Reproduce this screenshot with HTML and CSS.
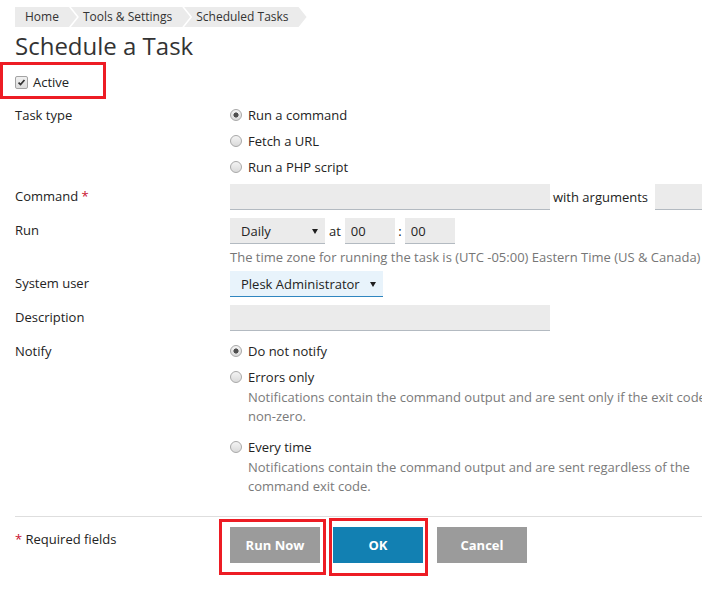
FILE: index.html
```html
<!DOCTYPE html>
<html lang="en">
<head>
    <meta charset="UTF-8">
    <meta name="viewport" content="width=device-width, initial-scale=1.0">
    <title>Schedule a Task</title>
    <link rel="stylesheet" href="styles.css">
</head>
<body>
    <div class="page">
        <ul class="breadcrumbs">
            <li>Home</li>
            <li>Tools &amp; Settings</li>
            <li>Scheduled Tasks</li>
        </ul>

        <h1>Schedule a Task</h1>

        <div class="active-box">
            <label class="check">
                <span class="checkbox">
                    <svg width="13" height="13" viewBox="0 0 13 13">
                        <path d="M3 6.6 L5.4 9 L10 3.6" fill="none" stroke="#333" stroke-width="2"/>
                    </svg>
                </span>
                Active
            </label>
        </div>

        <form class="task-form">
            <!-- task type -->
            <div class="row">
                <div class="label">Task type</div>
                <div class="field">
                    <label class="radio"><input type="radio" name="type" checked>Run a command</label>
                    <label class="radio"><input type="radio" name="type">Fetch a URL</label>
                    <label class="radio"><input type="radio" name="type">Run a PHP script</label>
                </div>
            </div>

            <div class="row row-command">
                <div class="label label-input">Command <span class="req">*</span></div>
                <div class="field inline">
                    <input class="input input-wide" type="text">
                    <span class="args-text">with arguments</span>
                    <input class="input input-args" type="text">
                </div>
            </div>

            <div class="row row-run">
                <div class="label label-input">Run</div>
                <div class="field">
                    <div class="inline">
                        <span class="select select-run">
                            <select><option>Daily</option></select>
                        </span>
                        <span class="at">at</span>
                        <input class="input input-time" type="text" value="00">
                        <span class="colon">:</span>
                        <input class="input input-time" type="text" value="00">
                    </div>
                    <div class="hint">The time zone for running the task is (UTC -05:00) Eastern Time (US &amp; Canada)</div>
                </div>
            </div>

            <div class="row row-user">
                <div class="label label-input">System user</div>
                <div class="field">
                    <span class="select select-user">
                        <select><option>Plesk Administrator</option></select>
                    </span>
                </div>
            </div>

            <div class="row row-desc">
                <div class="label label-input">Description</div>
                <div class="field">
                    <input class="input input-wide" type="text">
                </div>
            </div>

            <!-- notifications -->
            <div class="row row-notify">
                <div class="label">Notify</div>
                <div class="field">
                    <label class="radio"><input type="radio" name="notify" checked>Do not notify</label>
                    <label class="radio"><input type="radio" name="notify">Errors only</label>
                    <div class="desc">Notifications contain the command output and are sent only if the exit code is non-zero.</div>
                    <label class="radio radio-spaced"><input type="radio" name="notify">Every time</label>
                    <div class="desc">Notifications contain the command output and are sent regardless of the command exit code.</div>
                </div>
            </div>

            <div class="footer">
                <div class="label footer-label"><span class="req">*</span> Required fields</div>
                <div class="buttons">
                    <span class="mark mark-run"><button type="button" class="btn">Run Now</button></span>
                    <span class="mark mark-ok"><button type="button" class="btn btn-primary">OK</button></span>
                    <button type="button" class="btn btn-cancel">Cancel</button>
                </div>
            </div>
        </form>
    </div>
</body>
</html>
```

FILE: styles.css
```css
html, body {
    margin: 0;
    overflow: hidden;
    background: #fff;
}
body {
    font-family: "Open Sans", "DejaVu Sans", sans-serif;
    font-size: 13px;
    color: #232323;
}
.page {
    width: 780px;
    padding: 7px 0 0 15px;
}

/* breadcrumbs */
.breadcrumbs {
    display: flex;
    list-style: none;
    margin: 0;
    padding: 0;
    height: 20px;
    font-size: 12px;
    line-height: 20px;
    color: #333;
}
.breadcrumbs li {
    background: #ebebeb;
    padding: 0 18px 0 12px;
    margin-left: -6px;
    clip-path: polygon(0 0, calc(100% - 8px) 0, 100% 50%, calc(100% - 8px) 100%, 0 100%, 8px 50%);
}
.breadcrumbs li:first-child {
    margin-left: 0;
    padding-left: 10px;
    clip-path: polygon(0 0, calc(100% - 8px) 0, 100% 50%, calc(100% - 8px) 100%, 0 100%);
}

h1 {
    margin: 4px 0 1px;
    font-size: 24px;
    line-height: 30px;
    font-weight: normal;
    color: #333;
}

/* active checkbox, marked with the red frame */
.active-box {
    box-sizing: border-box;
    width: 106px;
    height: 37px;
    margin-left: -15px;
    padding: 3px 0 0 12px;
    border: 3px solid #ed1c24;
    display: flex;
    align-items: center;
}
.check {
    display: flex;
    align-items: center;
}
.checkbox {
    box-sizing: border-box;
    width: 13px;
    height: 13px;
    margin-right: 5px;
    border: 1px solid #a3a3a3;
    border-radius: 2px;
    background: linear-gradient(#f0f0f0, #dcdcdc);
    display: flex;
    align-items: center;
    justify-content: center;
}
.checkbox svg {
    width: 11px;
    height: 11px;
}

/* form rows */
.row {
    display: flex;
}
.label {
    width: 215px;
    flex: none;
    line-height: 26px;
}
.label-input {
    line-height: 24px;
}
.req {
    color: #c8102e;
}
.field {
    display: flex;
    flex-direction: column;
    align-items: flex-start;
}
.inline {
    display: flex;
    flex-direction: row;
    align-items: center;
}
.task-form .row:first-child {
    margin-top: 3px;
}
.row-command { margin-top: 4px; }
.row-run { margin-top: 8px; }
.row-user { margin-top: 4px; }
.row-desc { margin-top: 8px; }
.row-notify { margin-top: 7px; }

.radio {
    display: flex;
    align-items: center;
    height: 26px;
}
.radio-spaced {
    margin-top: 8px;
}
.radio input {
    appearance: none;
    -webkit-appearance: none;
    box-sizing: border-box;
    width: 12px;
    height: 12px;
    margin: 0 6px 0 0;
    border: 1px solid #a8a8a8;
    border-radius: 50%;
    background: linear-gradient(#f4f4f4, #dadada);
}
.radio input:checked {
    background: radial-gradient(circle, #4f4f4f 0 2.3px, transparent 2.8px), linear-gradient(#f4f4f4, #dadada);
}
.desc {
    width: 482px;
    margin: -2px 0 0 18px;
    line-height: 19px;
    color: #7a7a7a;
}

.input {
    box-sizing: border-box;
    height: 26px;
    padding: 0 6px;
    border: 0;
    border-bottom: 1px solid #b3bac1;
    background: #ebebeb;
    font: inherit;
    color: #232323;
    outline: none;
}
.input-wide { width: 320px; }
.input-args { width: 100px; }
.input-time { width: 50px; }
.args-text {
    margin: 0 7px 0 3px;
}
.at {
    margin: 0 4px;
}
.colon {
    width: 10px;
    text-align: center;
}

.select {
    position: relative;
    display: inline-block;
}
.select select {
    appearance: none;
    -webkit-appearance: none;
    box-sizing: border-box;
    height: 26px;
    padding: 0 20px 0 11px;
    border: 0;
    border-bottom: 1px solid #b3bac1;
    border-radius: 0;
    background: #ebebeb;
    font: inherit;
    color: #232323;
    outline: none;
}
.select::after {
    content: "";
    position: absolute;
    right: 7px;
    top: 50%;
    margin-top: -2px;
    border-left: 3px solid transparent;
    border-right: 3px solid transparent;
    border-top: 5px solid #1e1e1e;
}
.select-run select { width: 95px; }
.select-user select {
    width: 153px;
    background: #e8f3fb;
    border-bottom-color: #2f86c0;
}

.hint {
    margin-top: 3px;
    line-height: 20px;
    white-space: nowrap;
    color: #767676;
}

/* footer with buttons */
.footer {
    display: flex;
    margin-top: 20px;
    padding-top: 1px;
    border-top: 1px solid #dedede;
}
.footer-label {
    padding-top: 11px;
    line-height: 20px;
}
.buttons {
    display: flex;
    align-items: flex-start;
}
.mark {
    display: block;
    border: 3px solid #ed1c24;
}
.mark-run {
    margin: 1px 0 0 -11px;
    padding: 5px 3px 9px 8px;
}
.mark-ok {
    margin-left: 3px;
    padding: 6px 2px 10px 1px;
}
.btn {
    display: block;
    width: 90px;
    height: 36px;
    border: 0;
    background: #9b9b9b;
    color: #fff;
    font-family: inherit;
    font-size: 13px;
    font-weight: bold;
    cursor: pointer;
}
.btn-primary {
    background: #1280b2;
}
.btn-cancel {
    margin: 9px 0 0 9px;
}
```
